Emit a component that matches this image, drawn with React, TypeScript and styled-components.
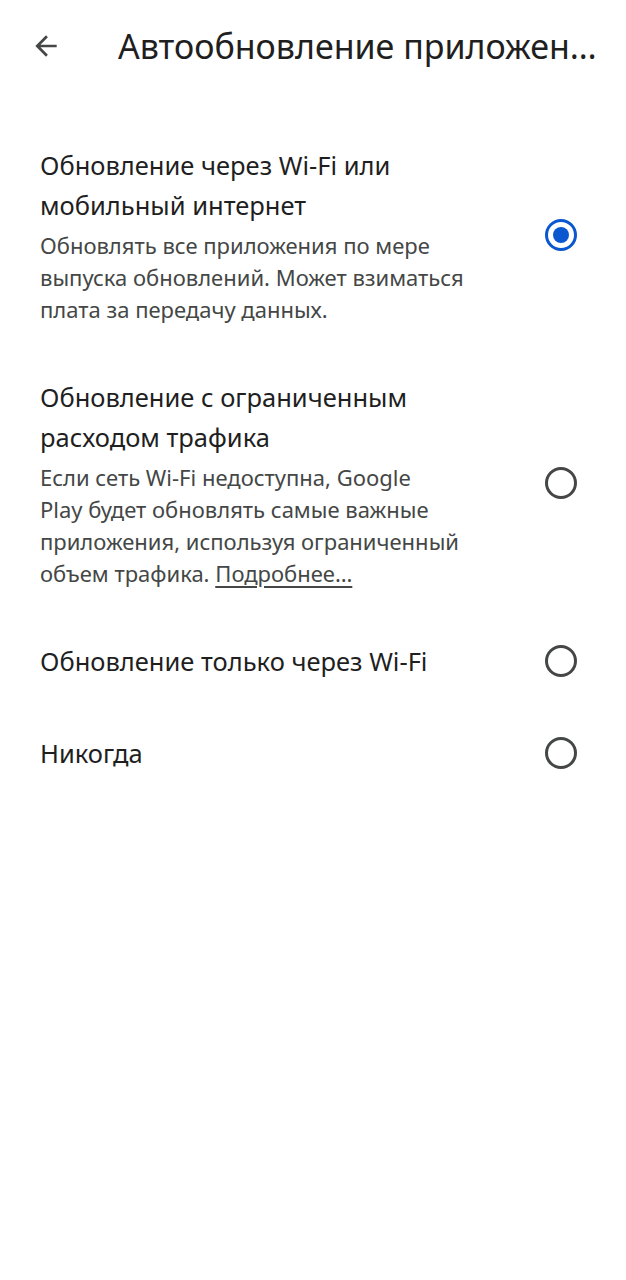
import React, { useState } from 'react';
import styled, { createGlobalStyle } from 'styled-components';

const GlobalStyle = createGlobalStyle`
  html, body {
    margin: 0;
    padding: 0;
    background: #ffffff;
    font-family: "Noto Sans", Roboto, "Liberation Sans", sans-serif;
  }
`;

type Option = {
  id: string;
  title: string;
  description?: string;
  link?: string;
};

// "Play\u00a0будет" keeps the wrap where Google Play puts it
const options: Option[] = [
  {
    id: 'any',
    title: 'Обновление через Wi-Fi или мобильный интернет',
    description:
      'Обновлять все приложения по мере выпуска обновлений. Может взиматься плата за передачу данных.',
  },
  {
    id: 'limited',
    title: 'Обновление с ограниченным расходом трафика',
    description:
      'Если сеть Wi-Fi недоступна, Google Play\u00a0будет обновлять самые важные приложения, используя ограниченный объем трафика.',
    link: 'Подробнее…',
  },
  { id: 'wifi', title: 'Обновление только через Wi-Fi' },
  { id: 'never', title: 'Никогда' },
];

const App = () => {
  const [selected, setSelected] = useState('any');

  return (
    <>
      <GlobalStyle />
      <Page>
        <Header>
          <BackButton aria-label="Назад">
            <svg width="32" height="32" viewBox="0 0 24 24">
              <path
                d="M20 11H7.83l5.59-5.59L12 4l-8 8 8 8 1.41-1.41L7.83 13H20v-2z"
                fill="#444746"
              />
            </svg>
          </BackButton>
          <Title>Автообновление приложений</Title>
        </Header>
        <List>
          {options.map((opt) => (
            <Item key={opt.id} onClick={() => setSelected(opt.id)}>
              <TextBlock>
                <ItemTitle>{opt.title}</ItemTitle>
                {opt.description && (
                  <Description>
                    {opt.description}
                    {opt.link && (
                      <>
                        {' '}
                        <Link>{opt.link}</Link>
                      </>
                    )}
                  </Description>
                )}
              </TextBlock>
              <Radio $checked={selected === opt.id} />
            </Item>
          ))}
        </List>
      </Page>
    </>
  );
};

const Page = styled.div`
  width: 626px;
  min-height: 1280px;
  background: #ffffff;
`;

const Header = styled.header`
  display: flex;
  align-items: center;
  height: 92px;
  padding: 0 14px 0 30px;
  box-sizing: border-box;
`;

const BackButton = styled.button`
  display: flex;
  align-items: center;
  justify-content: center;
  width: 32px;
  height: 32px;
  padding: 0;
  border: none;
  background: none;
  margin-right: 56px;
`;

const Title = styled.h1`
  flex: 1;
  min-width: 0;
  margin: 0;
  font-size: 34px;
  line-height: 44px;
  font-weight: 400;
  color: #1f1f1f;
  white-space: nowrap;
  overflow: hidden;
  text-overflow: ellipsis;
`;

const List = styled.div`
  display: flex;
  flex-direction: column;
  padding-top: 27px;
`;

const Item = styled.div`
  display: flex;
  align-items: center;
  justify-content: space-between;
  padding: 26px 49px 26px 40px;
  cursor: pointer;
`;

const TextBlock = styled.div`
  width: 445px;
`;

const ItemTitle = styled.div`
  font-size: 25.5px;
  line-height: 40px;
  color: #1f1f1f;
`;

const Description = styled.div`
  margin-top: 4px;
  font-size: 22px;
  line-height: 32px;
  color: #444746;
`;

const Link = styled.span`
  text-decoration: underline;
  text-underline-offset: 4px;
`;

const Radio = styled.span<{ $checked: boolean }>`
  position: relative;
  flex: none;
  width: 32px;
  height: 32px;
  box-sizing: border-box;
  border-radius: 50%;
  border: 3px solid ${(p) => (p.$checked ? '#0b57d0' : '#444746')};

  &::after {
    content: '';
    position: absolute;
    inset: 5px;
    border-radius: 50%;
    background: #0b57d0;
    display: ${(p) => (p.$checked ? 'block' : 'none')};
  }
`;

export default App;
